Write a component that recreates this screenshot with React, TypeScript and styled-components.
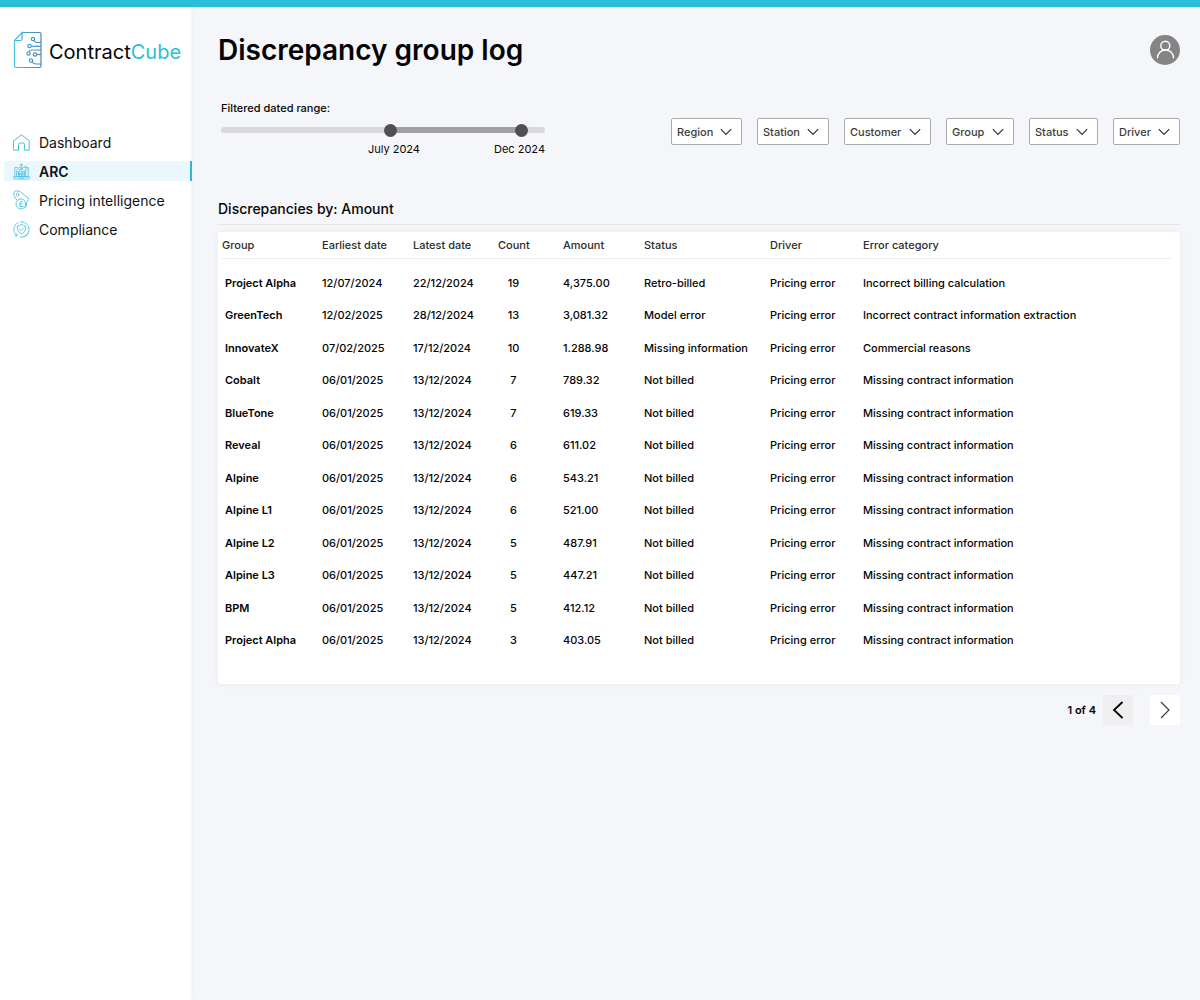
import React, { useState } from "react";
import styled, { createGlobalStyle } from "styled-components";

const GlobalStyle = createGlobalStyle`
  *, *::before, *::after { box-sizing: border-box; }
  body {
    margin: 0;
    background: #f5f6f9;
    color: #050505;
    font-family: Inter, "Liberation Sans", sans-serif;
  }
  button, input, select { font: inherit; color: inherit; margin: 0; }
`;

const Page = styled.div`
  display: flex;
  flex-direction: column;
  min-height: 100vh;
`;

const TopBar = styled.div`
  height: 7px;
  background: #29bfd9;
`;

const Body = styled.div`
  display: flex;
  flex: 1;
`;

const Sidebar = styled.aside`
  flex: 0 0 192px;
  padding-top: 24px;
  background: linear-gradient(to right, #fff 191px, #f3f5f7 191px);
  box-shadow: 0 0 6px rgba(30, 50, 80, 0.05);
`;

const Brand = styled.a`
  display: flex;
  align-items: center;
  gap: 7px;
  height: 38px;
  margin-left: 13px;
  color: #050505;
  font-size: 20px;
  line-height: 28px;
  text-decoration: none;
`;

const BrandName = styled.span`
  padding-top: 3px;
`;

const BrandAccent = styled.span`
  color: #29bfd9;
`;

const NavList = styled.ul`
  display: flex;
  flex-direction: column;
  gap: 9px;
  margin: 63px 0 0 4px;
  padding: 0;
  list-style: none;
`;

const NavLink = styled.a<{ $active?: boolean }>`
  display: flex;
  align-items: center;
  gap: 9px;
  height: 20px;
  padding-left: 9px;
  border-right: 2px solid ${(p) => (p.$active ? "#35b4d0" : "transparent")};
  background: ${(p) => (p.$active ? "#eaf8fe" : "transparent")};
  color: #111;
  font-size: 14px;
  font-weight: ${(p) => (p.$active ? 600 : 400)};
  text-decoration: none;
`;

const LineIcon = styled.svg`
  flex: none;
  fill: none;
  stroke: #4bbfe3;
  stroke-linecap: round;
  stroke-linejoin: round;
`;

const Main = styled.main`
  flex: 1;
  min-width: 0;
  padding: 25px 20px 40px 26px;
`;

const Header = styled.header`
  display: flex;
  align-items: center;
  justify-content: space-between;
  height: 36px;
`;

const Title = styled.h1`
  margin: 0;
  font-size: 28px;
  font-weight: 600;
  line-height: 36px;
`;

const Avatar = styled.button`
  display: flex;
  width: 30px;
  height: 30px;
  padding: 0;
  border: 0;
  border-radius: 50%;
  background: #848484;
`;

const Controls = styled.div`
  display: flex;
  align-items: flex-start;
  justify-content: space-between;
  gap: 20px;
  margin-top: 32px;
`;

const RangeGroup = styled.fieldset`
  width: 324px;
  margin: 0 0 0 3px;
  padding: 0;
  border: 0;
  font-size: 11px;
  line-height: 16px;
`;

const RangeTitle = styled.legend`
  padding: 0;
  font-weight: 500;
`;

const SliderStack = styled.div`
  display: grid;
  align-items: center;
  height: 14px;
  margin-top: 7px;
`;

const Track = styled.div`
  grid-area: 1 / 1;
  display: flex;
  height: 6px;
  border-radius: 3px;
  background: #d9d9d9;
`;

const TrackFill = styled.div`
  background: #a0a0a0;
`;

const RangeInput = styled.input`
  grid-area: 1 / 1;
  width: 100%;
  height: 14px;
  appearance: none;
  background: transparent;
  pointer-events: none;

  &::-webkit-slider-thumb {
    appearance: none;
    width: 13px;
    height: 13px;
    border-radius: 50%;
    background: #505050;
    pointer-events: auto;
  }
`;

const RangeLabels = styled.div`
  display: flex;
  justify-content: flex-end;
  gap: 74px;
  margin-top: 4px;
`;

const Filters = styled.div`
  display: flex;
  gap: 15px;
  margin-top: 18px;
`;

const FilterBox = styled.label<{ $width: number }>`
  display: grid;
  align-items: center;
  width: ${(p) => p.$width}px;
  height: 27px;
`;

const FilterSelect = styled.select`
  grid-area: 1 / 1;
  width: 100%;
  height: 100%;
  padding: 0 0 0 5px;
  appearance: none;
  border: 1px solid #a9aaac;
  border-radius: 2px;
  background: #fff;
  color: #3c3c3c;
  font-size: 11px;
  font-weight: 500;
`;

const Chevron = styled.svg`
  grid-area: 1 / 1;
  justify-self: end;
  margin-right: 10px;
  fill: none;
  stroke: #333;
  stroke-width: 1.2;
  pointer-events: none;
`;

const SectionTitle = styled.h2`
  margin: 42px 0 7px;
  padding-bottom: 5px;
  border-bottom: 1px solid #e4e6e8;
  font-size: 14px;
  font-weight: 500;
  line-height: 20px;
`;

const Card = styled.section`
  padding: 0 9px 28px 4px;
  border-radius: 3px;
  background: #fff;
  box-shadow: 0 0 6px rgba(40, 50, 70, 0.06);
`;

const Table = styled.table`
  width: 100%;
  table-layout: fixed;
  border-collapse: collapse;
  font-size: 11px;
  line-height: 16px;
  text-align: left;
`;

const Column = styled.col<{ $width?: number }>`
  width: ${(p) => (p.$width ? `${p.$width}px` : "auto")};
`;

const HeadCell = styled.th`
  height: 26px;
  padding: 0;
  border-bottom: 1px solid #ececee;
  color: #2b2b2b;
  font-weight: 500;
`;

const TableBody = styled.tbody`
  &::before {
    content: "";
    display: table-row;
    height: 8px;
  }
`;

const Row = styled.tr`
  height: 33px;

  &:nth-child(even) {
    height: 32px;
  }
`;

const NameCell = styled.th`
  padding: 0 0 0 3px;
  font-weight: 600;
`;

const Cell = styled.td`
  padding: 0;
  font-weight: 500;
  white-space: nowrap;
`;

const CountCell = styled(Cell)`
  padding-right: 34px;
  text-align: center;
`;

const Pager = styled.nav`
  display: flex;
  align-items: center;
  justify-content: flex-end;
  margin-top: 11px;
  font-size: 11px;
  font-weight: 600;
`;

const PageButton = styled.button<{ $muted?: boolean }>`
  display: grid;
  place-items: center;
  width: 30px;
  height: 30px;
  margin-left: ${(p) => (p.$muted ? 7 : 17)}px;
  padding: 0;
  border: 0;
  border-radius: 1px;
  background: ${(p) => (p.$muted ? "#efefef" : "#fff")};
`;

const BrandMark = () => (
  <svg width="29" height="38" viewBox="0 0 29 38" fill="none" strokeWidth="1.2" aria-hidden="true">
    <defs>
      <linearGradient id="mark" gradientUnits="userSpaceOnUse" x1="1" y1="20" x2="28" y2="20">
        <stop offset="0" stopColor="#45c3df" />
        <stop offset="1" stopColor="#4d82bd" />
      </linearGradient>
    </defs>
    <g stroke="url(#mark)">
      <path d="M9 1.500H26.500Q28 1.500 28 3V35Q28 36.500 26.500 36.500H3Q1.500 36.500 1.500 35V9.500L9 1.500V8Q9 9.500 7.500 9.500H1.500" />
      <circle cx="20" cy="8" r="1.700" />
      <path d="M21 9.400Q22 11.500 24 11.500H28" />
      <circle cx="16.500" cy="15" r="1.700" />
      <path d="M18.200 15.300H28" />
      <circle cx="15.500" cy="22.500" r="1.700" />
      <path d="M16 20.800Q17 19 19 19H28" />
      <circle cx="22" cy="23.500" r="1.700" />
      <path d="M23.700 23.500H28" />
      <circle cx="18" cy="29.500" r="1.700" />
      <path d="M19 31Q20.500 33 23 33H28" />
    </g>
  </svg>
);

const HomeIcon = () => (
  <LineIcon width="17" height="17" viewBox="0 0 17 17" aria-hidden="true">
    <path d="M.8 6.800 8.500.8l7.700 6v9.400h-4.700V10.500q0-1.500-1.500-1.500H7q-1.500 0-1.500 1.500v5.700H.8Z" />
  </LineIcon>
);

const ReportIcon = () => (
  <LineIcon width="17" height="17" viewBox="0 0 17 17" strokeWidth=".8" aria-hidden="true">
    <path d="M4.500 4.500H1.800v9H15.200v-9H12M.6 13.800h15.800v1q0 1.200-1.200 1.200H1.800Q.6 16 .6 14.800ZM6.500 15h4" />
    <path d="M3.500 13V8.500h2V13M6.700 13V6.500h2V13M9.900 13V8h1.800v5M12.700 13V6h1.500M3.500 7l3-2.500 2.500 1L13 3M8.300 6V1M6.800 2.500 8.300 1l1.500 1.500M4.500 11h8" />
  </LineIcon>
);

const PriceIcon = () => (
  <LineIcon width="17" height="20" viewBox="0 0 17 20" strokeWidth=".9" aria-hidden="true">
    <path d="M3 9 1 5.500Q.4 4.500.8 3.400L1.500 1.700Q2 .8 3 .9L6 1.300q1 .1 1.700.8l7.600 6q1 .9.300 1.800L14 12M3 9l1 1" />
    <circle cx="4.500" cy="4.500" r="1.300" />
    <circle cx="8" cy="14" r="5" />
    <path d="M9.800 12.200Q9.300 11.200 8.300 11.300 7 11.600 7.200 13v1.500q0 1.300-.9 2H9.900M6.300 14h2.600M13.300 12.500q1 2.500-.8 5" />
  </LineIcon>
);

const ShieldIcon = () => (
  <LineIcon width="17" height="17" viewBox="0 0 17 17" strokeWidth=".9" aria-hidden="true">
    <path d="M8.500 3.500Q10.500 5 12.800 5q.4 5.500-4.300 8Q3.800 10.500 4.200 5 6.500 5 8.500 3.500ZM6.500 8.200l1.500 1.500 2.800-3" />
    <path d="M5 1.500A7.800 7.800 0 0 0 3.500 14.500M2 15h2v-2.300M7.500.8A7.800 7.800 0 0 1 14.500 3.500M15.500 5.200A7.800 7.800 0 0 1 7 16M12 15.300A7.800 7.800 0 0 0 15 12.500" />
  </LineIcon>
);

const UserIcon = () => (
  <svg width="30" height="30" viewBox="0 0 30 30" fill="none" stroke="#fff" strokeWidth="1.400" strokeLinecap="round" aria-hidden="true">
    <circle cx="15.300" cy="10.800" r="4.500" />
    <path d="M7.500 22.800a8 7.800 0 0 1 16 0" />
  </svg>
);

const NAV = [
  { label: "Dashboard", Icon: HomeIcon },
  { label: "ARC", Icon: ReportIcon, active: true },
  { label: "Pricing intelligence", Icon: PriceIcon },
  { label: "Compliance", Icon: ShieldIcon },
];

const FILTERS = [
  { label: "Region", width: 71 },
  { label: "Station", width: 72 },
  { label: "Customer", width: 87 },
  { label: "Group", width: 68 },
  { label: "Status", width: 69 },
  { label: "Driver", width: 67 },
];

const COLUMNS: { label: string; width?: number }[] = [
  { label: "Group", width: 100 },
  { label: "Earliest date", width: 91 },
  { label: "Latest date", width: 85 },
  { label: "Count", width: 65 },
  { label: "Amount", width: 81 },
  { label: "Status", width: 126 },
  { label: "Driver", width: 93 },
  { label: "Error category" },
];

const MISSING = "Missing contract information";

const ROWS: [string, string, string, number, string, string, string][] = [
  ["Project Alpha", "12/07/2024", "22/12/2024", 19, "4,375.00", "Retro-billed", "Incorrect billing calculation"],
  ["GreenTech", "12/02/2025", "28/12/2024", 13, "3,081.32", "Model error", "Incorrect contract information extraction"],
  ["InnovateX", "07/02/2025", "17/12/2024", 10, "1.288.98", "Missing information", "Commercial reasons"],
  ["Cobalt", "06/01/2025", "13/12/2024", 7, "789.32", "Not billed", MISSING],
  ["BlueTone", "06/01/2025", "13/12/2024", 7, "619.33", "Not billed", MISSING],
  ["Reveal", "06/01/2025", "13/12/2024", 6, "611.02", "Not billed", MISSING],
  ["Alpine", "06/01/2025", "13/12/2024", 6, "543.21", "Not billed", MISSING],
  ["Alpine L1", "06/01/2025", "13/12/2024", 6, "521.00", "Not billed", MISSING],
  ["Alpine L2", "06/01/2025", "13/12/2024", 5, "487.91", "Not billed", MISSING],
  ["Alpine L3", "06/01/2025", "13/12/2024", 5, "447.21", "Not billed", MISSING],
  ["BPM", "06/01/2025", "13/12/2024", 5, "412.12", "Not billed", MISSING],
  ["Project Alpha", "06/01/2025", "13/12/2024", 3, "403.05", "Not billed", MISSING],
];

const DAYS = 365;

function DateRange() {
  const [from, setFrom] = useState(191);
  const [to, setTo] = useState(345);
  return (
    <RangeGroup>
      <RangeTitle>Filtered dated range:</RangeTitle>
      <SliderStack>
        <Track>
          <TrackFill
            style={{ marginLeft: `${(from / DAYS) * 100}%`, width: `${((to - from) / DAYS) * 100}%` }}
          />
        </Track>
        <RangeInput
          type="range"
          aria-label="From"
          max={DAYS}
          value={from}
          onChange={(e) => setFrom(Math.min(Number(e.target.value), to))}
        />
        <RangeInput
          type="range"
          aria-label="To"
          max={DAYS}
          value={to}
          onChange={(e) => setTo(Math.max(Number(e.target.value), from))}
        />
      </SliderStack>
      <RangeLabels>
        <span>July 2024</span>
        <span>Dec 2024</span>
      </RangeLabels>
    </RangeGroup>
  );
}

export default function App() {
  return (
    <Page>
      <GlobalStyle />
      <TopBar />
      <Body>
        <Sidebar>
          <Brand href="#">
            <BrandMark />
            <BrandName>
              Contract<BrandAccent>Cube</BrandAccent>
            </BrandName>
          </Brand>
          <nav aria-label="Main">
            <NavList>
              {NAV.map(({ label, Icon, active }) => (
                <li key={label}>
                  <NavLink href="#" $active={active} aria-current={active ? "page" : undefined}>
                    <Icon />
                    {label}
                  </NavLink>
                </li>
              ))}
            </NavList>
          </nav>
        </Sidebar>
        <Main>
          <Header>
            <Title>Discrepancy group log</Title>
            <Avatar type="button" aria-label="Account">
              <UserIcon />
            </Avatar>
          </Header>
          <Controls>
            <DateRange />
            <Filters>
              {FILTERS.map(({ label, width }) => (
                <FilterBox key={label} $width={width}>
                  <FilterSelect aria-label={label}>
                    <option>{label}</option>
                  </FilterSelect>
                  <Chevron width="12" height="8" viewBox="0 0 12 8" aria-hidden="true">
                    <path d="M.8 1.200 6 6.500l5.200-5.300" />
                  </Chevron>
                </FilterBox>
              ))}
            </Filters>
          </Controls>
          <SectionTitle>Discrepancies by: Amount</SectionTitle>
          <Card>
            <Table>
              <colgroup>
                {COLUMNS.map((c) => (
                  <Column key={c.label} $width={c.width} />
                ))}
              </colgroup>
              <thead>
                <tr>
                  {COLUMNS.map((c) => (
                    <HeadCell key={c.label} scope="col">
                      {c.label}
                    </HeadCell>
                  ))}
                </tr>
              </thead>
              <TableBody>
                {ROWS.map(([name, first, last, count, amount, status, category], i) => (
                  <Row key={i}>
                    <NameCell scope="row">{name}</NameCell>
                    <Cell>{first}</Cell>
                    <Cell>{last}</Cell>
                    <CountCell>{count}</CountCell>
                    <Cell>{amount}</Cell>
                    <Cell>{status}</Cell>
                    <Cell>Pricing error</Cell>
                    <Cell>{category}</Cell>
                  </Row>
                ))}
              </TableBody>
            </Table>
          </Card>
          <Pager aria-label="Pages">
            <span>1 of 4</span>
            <PageButton type="button" $muted aria-label="Previous page">
              <svg width="12" height="18" viewBox="0 0 12 18" fill="none" stroke="#000" strokeWidth="1.800" aria-hidden="true">
                <path d="M10.500 1 2 9l8.500 8" />
              </svg>
            </PageButton>
            <PageButton type="button" aria-label="Next page">
              <svg width="12" height="18" viewBox="0 0 12 18" fill="none" stroke="#333" strokeWidth="1.100" aria-hidden="true">
                <path d="M2 1l8 8-8 8" />
              </svg>
            </PageButton>
          </Pager>
        </Main>
      </Body>
    </Page>
  );
}
